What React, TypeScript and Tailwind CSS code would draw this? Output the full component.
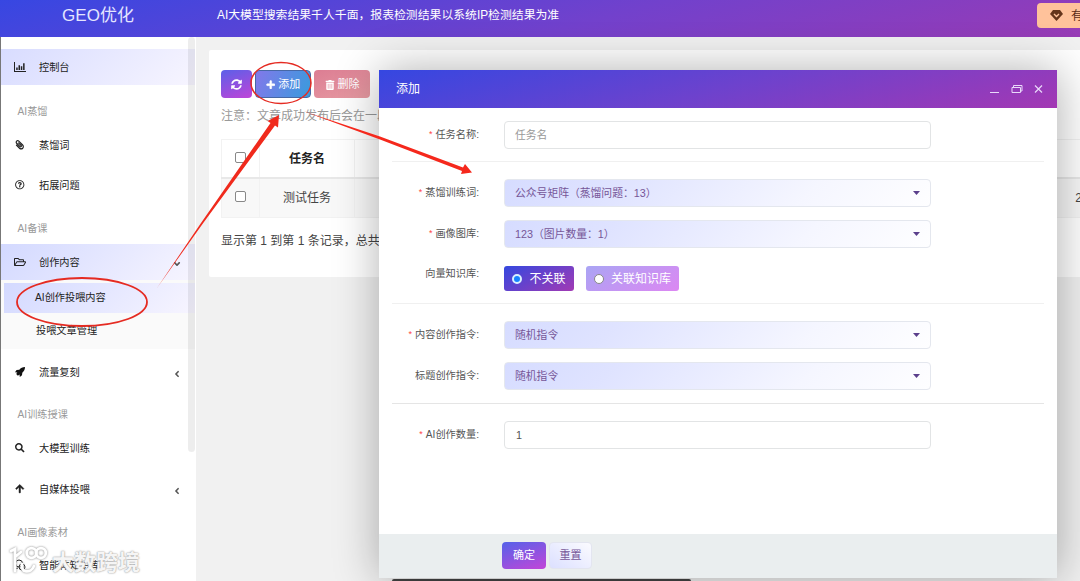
import type { ReactNode } from "react";
import {
  FaPaperclip,
  FaRegQuestionCircle,
  FaRegFolderOpen,
  FaSearch,
  FaArrowUp,
  FaPlus,
  FaTrashAlt,
  FaSyncAlt,
  FaAngleLeft,
  FaAngleDown,
} from "react-icons/fa";

const BarChart = () => (
  <svg width="12" height="10" viewBox="0 0 12 10" fill="currentColor">
    <path d="M0 0h1v9h11v1H0zM2.2 5.5h1.5V8H2.2zM4.5 3.2H6V8H4.500zM6.800 4.200h1.500V8H6.800zM9.100 1.200h1.500V8H9.100z" />
  </svg>
);

const Rocket = () => (
  <svg width="10" height="10" viewBox="0 0 10 10" fill="#111">
    <path d="M10 0C7.500 0 5.700 1 4.300 2.700L1.600 3 0 5.300l2.300.2L1.200 7l1.700 1.700L4.500 7.600l.3 2.400L7 8.300l.3-2.600C9 4.300 10 2.500 10 0z" />
  </svg>
);

const Chat = () => (
  <svg width="12" height="12" viewBox="0 0 12 12" fill="none" stroke="currentColor">
    <circle cx="5" cy="4.500" r="3.500" />
    <circle cx="8" cy="8" r="3" />
    <path d="M2 7.500L1 10l3-1" />
  </svg>
);

function Item({ icon, label, className, arrow }: { icon: ReactNode; label: string; className: string; arrow?: ReactNode }) {
  return (
    <a className={"flex h-9 shrink-0 items-center text-[10.2px] text-[#222] " + className}>
      <span className="ml-3 flex w-[14px] justify-center text-[9.5px]">{icon}</span>
      <span className="ml-[12px] flex-1 pt-[2px]">{label}</span>
      {arrow && <span className="mr-[13px] mt-[4px] text-[10px] text-[#555]">{arrow}</span>}
    </a>
  );
}

const Heading = ({ label, className }: { label: string; className: string }) => (
  <div className={"flex h-7 shrink-0 items-center pl-[16.5px] pt-[2px] text-[10.2px] text-[#999] " + className}>{label}</div>
);

function Field({ label, required, className, children }: { label: string; required?: boolean; className: string; children: ReactNode }) {
  return (
    <div className={"flex items-center " + className}>
      <div className="mr-[25px] flex w-[87px] justify-end whitespace-nowrap text-[10.2px] leading-none text-[#555]">
        {required && <span className="mr-[3px] text-[9px] text-[#f44]">*</span>}
        <span>{label}</span>
      </div>
      {children}
    </div>
  );
}

const Select = ({ value }: { value: string }) => (
  <div className="flex h-7 w-[427px] items-center justify-between rounded-[4px] border border-[#e4e7ee] bg-[linear-gradient(135deg,#d6dcff_0%,#dfe3ff_25%,#f5f6ff_70%,#fefeff_100%)] pl-[10px] pr-[10px] text-[10.8px] text-[#765698]">
    <span>{value}</span>
    <svg width="7" height="4" viewBox="0 0 7 4" fill="#5b3f8c"><path d="M0 0h7L3.500 4z" /></svg>
  </div>
);

export default function App() {
  return (
    <div className="relative flex h-[581px] w-[1080px] flex-col overflow-hidden bg-[#f1f1f1] font-['Liberation_Sans','Noto_Sans_CJK_SC',sans-serif] leading-none">
      <header className="flex h-[37px] shrink-0 items-center bg-[linear-gradient(165deg,#3747e2_0%,#7241cc_55%,#983bb5_100%)] text-white">
        <div className="mb-[6px] w-[196px] text-center text-[17px] text-[#e4e5ff]">GEO优化</div>
        <div className="mb-[6px] ml-[21px] flex-1 whitespace-nowrap text-[11.85px]">AI大模型搜索结果千人千面，报表检测结果以系统IP检测结果为准</div>
        <div className="mb-[6px] flex h-[25px] w-[43px] items-center overflow-hidden whitespace-nowrap rounded-l-[4px] bg-[#ffc29b] pl-[13px] text-[12px] text-[#5a2d16]">
          <svg className="mr-[8px] shrink-0" width="13" height="11" viewBox="0 0 13 11">
            <path d="M3 0h7l3 4-6.500 7L0 4z" fill="#65351b" />
            <path d="M4 4l2.500 2.500L9 4" fill="none" stroke="#ffc29b" strokeWidth="1.400" />
          </svg>
          有
        </div>
      </header>

      <div className="flex min-h-0 flex-1">
        <aside className="relative flex w-[196px] shrink-0 flex-col overflow-hidden border-l border-[#777] bg-white pr-[1px]">
          <Item className="mt-[12px] bg-[linear-gradient(135deg,#d8dcff,#f7f5ff)]" icon={<BarChart />} label="控制台" />
          <Heading className="mt-[12px]" label="AI蒸馏" />
          <Item className="mt-[2px]" icon={<FaPaperclip className="-scale-x-100" />} label="蒸馏词" />
          <Item className="mt-[4px]" icon={<FaRegQuestionCircle />} label="拓展问题" />
          <Heading className="mt-[11px]" label="AI备课" />
          <Item className="mt-[2px] bg-[linear-gradient(135deg,#d3d9ff,#f7f5ff)]" icon={<FaRegFolderOpen className="text-[12px]" />} label="创作内容" arrow={<FaAngleDown />} />
          <div className="flex shrink-0 flex-col bg-[#fafafa] pt-[3px] text-[10.2px] text-[#222]">
            <a className="ml-[3px] flex h-[30px] items-center bg-[linear-gradient(135deg,#d3d9ff,#f7f5ff)] pl-[31px]">AI创作投喂内容</a>
            <a className="flex h-9 items-center pl-[35px] pt-[1px]">投喂文章管理</a>
          </div>
          <Item className="mt-[5px]" icon={<Rocket />} label="流量复刻" arrow={<FaAngleLeft />} />
          <Heading className="mt-[10px]" label="AI训练授课" />
          <Item className="mt-[2px]" icon={<FaSearch />} label="大模型训练" />
          <Item className="mt-[5px]" icon={<FaArrowUp stroke="#222" strokeWidth="25" />} label="自媒体投喂" arrow={<FaAngleLeft />} />
          <Heading className="mt-[11px]" label="AI画像素材" />
          <Item className="mt-[1px]" icon={<Chat />} label="智能体知识库" />
          <div className="absolute right-[1px] top-0 h-[415px] w-[7px] rounded-[4px] bg-black/[0.07]" />
        </aside>

        <main className="flex-1 pl-[13px] pt-[13px]">
          <section className="h-[227px] w-[900px] rounded-[2px] bg-white pl-[12px] pt-[20px]">
            <div className="flex gap-[3px] text-[11px] text-white">
              <button className="flex h-[28px] w-[31px] items-center justify-center rounded-[4px] bg-[linear-gradient(160deg,#5b60e8,#c044d8)]"><FaSyncAlt /></button>
              <button className="flex h-[28px] w-[56px] items-center justify-center gap-[3px] rounded-[4px] border border-[#4768a5] bg-[linear-gradient(110deg,#8278ea,#399bdd)] pt-[1px]"><FaPlus className="text-[9.5px]" stroke="white" strokeWidth="30" />添加</button>
              <button className="flex h-[28px] w-[56px] items-center justify-center gap-[3px] rounded-[4px] bg-[linear-gradient(160deg,#dc7d93,#e79ba2)] pt-[1px]"><FaTrashAlt className="text-[10px]" />删除</button>
            </div>
            <div className="mt-[12px] whitespace-nowrap text-[12px] text-[#999]">注意：文章成功发布后会在一段时间后显示</div>
            <table className="mt-[17px] w-[880px] table-fixed border-collapse text-center text-[12px] text-[#444]">
              <colgroup><col className="w-[38px]" /><col className="w-[95px]" /><col /></colgroup>
              <tbody>
                <tr className="h-[38px] font-bold text-[#222]">
                  <td className="border border-b-2 border-[#f2f2f2] border-b-[#e8e8e8]"><span className="inline-block h-[11px] w-[11px] rounded-[2px] border border-[#888] bg-white" /></td>
                  <td className="border border-b-2 border-[#f2f2f2] border-b-[#e8e8e8] pt-[2px]">任务名</td>
                  <td className="border border-b-2 border-[#f2f2f2] border-b-[#e8e8e8]" />
                </tr>
                <tr className="h-[40px] bg-[#f8f8f8]">
                  <td className="border border-[#f2f2f2]"><span className="inline-block h-[11px] w-[11px] rounded-[2px] border border-[#888] bg-white" /></td>
                  <td className="border border-[#f2f2f2]">测试任务</td>
                  <td className="border border-[#f2f2f2] pr-[18px] text-right">2</td>
                </tr>
              </tbody>
            </table>
            <div className="mt-[17px] whitespace-nowrap text-[12px] text-[#444]">显示第 1 到第 1 条记录，总共 1 条记录</div>
          </section>
        </main>
      </div>

      <div className="absolute bottom-0 left-[392px] h-[2px] w-[299px] rounded-t bg-[#444]" />

      <div role="dialog" className="absolute left-[379px] top-[70px] flex h-[508px] w-[678px] flex-col bg-white shadow-[1px_1px_43px_rgba(0,0,0,0.32)]">
        <div className="flex h-[38px] shrink-0 items-center bg-[linear-gradient(165deg,#3547e1_0%,#6d42cd_50%,#a338b3_100%)] pl-[17px] pr-[13px] text-[12px] text-white">
          <span className="flex-1">添加</span>
          <svg width="54" height="12" viewBox="0 0 54 12" fill="none" stroke="#e9d9fa">
            <path d="M0 9.500h9M45 2.500l7 7M52 2.500l-7 7" strokeWidth="1.200" />
            <path d="M22 4.500h8.500v5H22zM23.500 4V2.500h8.500v5.500h-1.500" />
          </svg>
        </div>
        <div className="flex flex-1 flex-col px-[13px]">
          <Field className="mt-[13px]" label="任务名称:" required>
            <div className="flex h-7 w-[427px] items-center rounded-[4px] border border-[#e2e4e5] pl-[10px] text-[10.8px] text-[#999]">任务名</div>
          </Field>
          <div className="mt-[12px] border-t border-[#f0f0f0]" />
          <Field className="mt-[17px]" label="蒸馏训练词:" required><Select value="公众号矩阵（蒸馏问题：13）" /></Field>
          <Field className="mt-[13px]" label="画像图库:" required><Select value="123（图片数量：1）" /></Field>
          <div className="mt-[18px] flex">
            <div className="mr-[25px] mt-[3px] w-[87px] text-right text-[10.2px] leading-none text-[#555]">向量知识库:</div>
            <div className="flex gap-[12px] text-[12px] text-white">
              <label className="flex h-[25px] w-[70px] items-center justify-center gap-[7px] rounded-[3px] bg-[linear-gradient(150deg,#3448df,#a23ab4)]">
                <span className="h-[10px] w-[10px] rounded-full border-2 border-[#d9f0ff] bg-[#1683ff]" />不关联
              </label>
              <label className="flex h-[25px] w-[93px] items-center justify-center gap-[7px] rounded-[3px] bg-[linear-gradient(150deg,#aaa5f4,#dc87f2)]">
                <span className="h-[10px] w-[10px] rounded-full border border-[#888] bg-white" />关联知识库
              </label>
            </div>
          </div>
          <div className="mt-[12px] border-t border-[#f0f0f0]" />
          <Field className="mt-[17px]" label="内容创作指令:" required><Select value="随机指令" /></Field>
          <Field className="mt-[13px]" label="标题创作指令:"><Select value="随机指令" /></Field>
          <div className="mt-[13px] border-t border-[#e5e5e5]" />
          <Field className="mt-[17px]" label="AI创作数量:" required>
            <div className="flex h-7 w-[427px] items-center rounded-[4px] border border-[#e2e4e5] pl-[11px] text-[10.8px] text-[#555]">1</div>
          </Field>
        </div>
        <div className="flex h-[44px] shrink-0 items-center gap-[3px] bg-[#eaeeef] pb-[1px] pl-[123px] text-[11px]">
          <button className="h-[27px] w-[44px] rounded-[4px] bg-[linear-gradient(160deg,#5562e9,#c345d8)] text-white">确定</button>
          <button className="h-[27px] w-[43px] rounded-[4px] border border-[#e3e5f0] bg-[linear-gradient(35deg,#dce0ff,#fbfbff)] text-[#765698]">重置</button>
        </div>
      </div>

      <svg className="pointer-events-none absolute inset-0" width="1080" height="581" viewBox="0 0 1080 581">
        <g fill="none" stroke="#e52b22">
          <ellipse cx="281" cy="83" rx="30" ry="20.500" strokeWidth="1.500" />
          <ellipse cx="82" cy="302" rx="65" ry="24" strokeWidth="1.800" />
        </g>
        <path d="M157 288L201 223L270.500 123L267.500 121L279 115L278 127.500L275 125.500L202.500 224z" fill="#f02a1c" />
        <path d="M303 111L380 136.500L463 167.500L465 164L472 172.500L461 174L462 171L380 139.500z" fill="#f5281c" />
      </svg>

      <div className="absolute left-[8px] top-[546px] flex items-center gap-[3px] text-[22px] font-bold text-white/90 [text-shadow:0_0_2px_#999,0_0_1px_#aaa]">
        <svg className="drop-shadow-[0_0_1px_#888]" width="41" height="30" viewBox="0 0 41 30" fill="none" stroke="white" strokeWidth="2.800" strokeLinecap="round">
          <path d="M3 5l4-2v22M7 11l6-5M14 18c-2 9 9 10 12 2" />
          <circle cx="23.500" cy="7" r="4.800" />
          <circle cx="33" cy="7" r="4.800" />
        </svg>
        <span className="pt-[3px]">大数跨境</span>
      </div>
    </div>
  );
}
